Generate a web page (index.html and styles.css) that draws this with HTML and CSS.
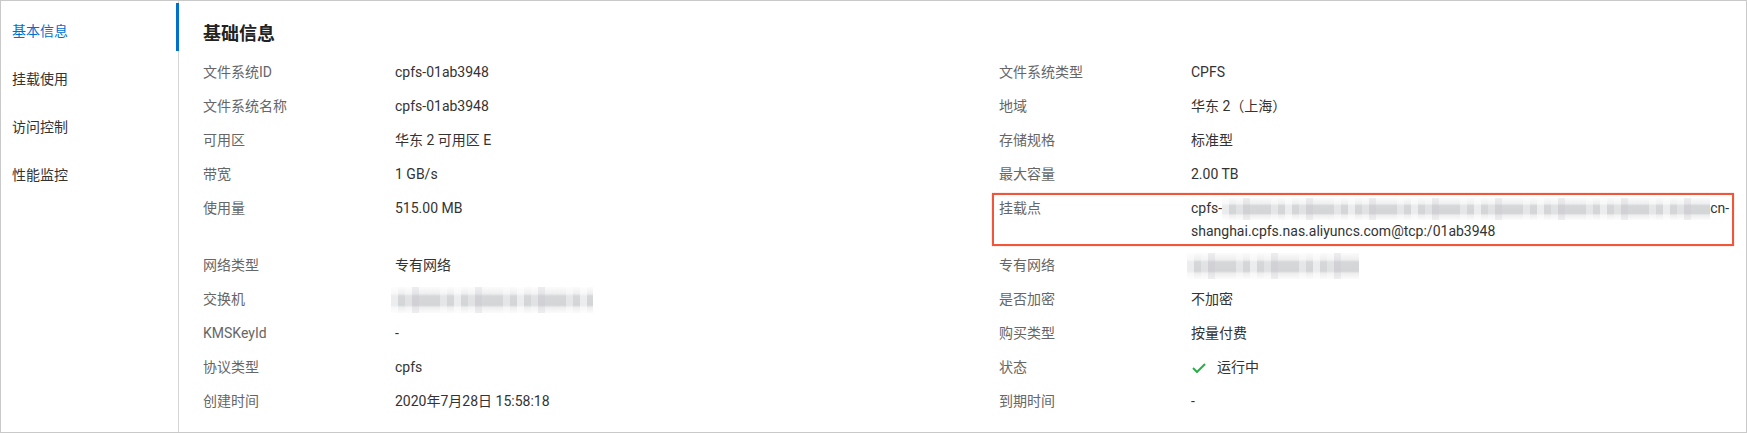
FILE: index.html
```html
<!DOCTYPE html>
<html>
<head>
  <title>基本信息</title>
  <link rel="stylesheet" href="styles.css">
</head>
<body>
  <div class="console">
    <aside class="side-nav">
      <a class="nav-item active">基本信息</a>
      <a class="nav-item">挂载使用</a>
      <a class="nav-item">访问控制</a>
      <a class="nav-item">性能监控</a>
    </aside>

    <main class="detail">
      <h2>基础信息</h2>

      <div class="info-grid">
        <div class="info-item"><span class="info-label">文件系统ID</span><span class="info-value">cpfs-01ab3948</span></div>
        <div class="info-item"><span class="info-label">文件系统类型</span><span class="info-value">CPFS</span></div>

        <div class="info-item"><span class="info-label">文件系统名称</span><span class="info-value">cpfs-01ab3948</span></div>
        <div class="info-item"><span class="info-label">地域</span><span class="info-value">华东 2（上海）</span></div>

        <div class="info-item"><span class="info-label">可用区</span><span class="info-value">华东 2 可用区 E</span></div>
        <div class="info-item"><span class="info-label">存储规格</span><span class="info-value">标准型</span></div>

        <div class="info-item"><span class="info-label">带宽</span><span class="info-value">1 GB/s</span></div>
        <div class="info-item"><span class="info-label">最大容量</span><span class="info-value">2.00 TB</span></div>

        <div class="info-item"><span class="info-label">使用量</span><span class="info-value">515.00 MB</span></div>
        <div class="info-item marked">
          <span class="info-label">挂载点</span>
          <span class="info-value">cpfs-<span class="masked mount-mask"></span>cn-<br>shanghai.cpfs.nas.aliyuncs.com@tcp:/01ab3948</span>
        </div>

        <div class="info-item"><span class="info-label">网络类型</span><span class="info-value">专有网络</span></div>
        <div class="info-item"><span class="info-label">专有网络</span><span class="info-value"><span class="masked vpc-mask"></span></span></div>

        <div class="info-item"><span class="info-label">交换机</span><span class="info-value"><span class="masked vsw-mask"></span></span></div>
        <div class="info-item"><span class="info-label">是否加密</span><span class="info-value">不加密</span></div>

        <div class="info-item"><span class="info-label">KMSKeyId</span><span class="info-value">-</span></div>
        <div class="info-item"><span class="info-label">购买类型</span><span class="info-value">按量付费</span></div>

        <div class="info-item"><span class="info-label">协议类型</span><span class="info-value">cpfs</span></div>
        <div class="info-item">
          <span class="info-label">状态</span>
          <span class="info-value">
            <svg class="status-icon" width="14" height="10" viewBox="0 0 14 10"><polyline points="1,5 5,9 13,1" fill="none" stroke="#27b047" stroke-width="2"/></svg>运行中
          </span>
        </div>

        <div class="info-item"><span class="info-label">创建时间</span><span class="info-value">2020年7月28日 15:58:18</span></div>
        <div class="info-item"><span class="info-label">到期时间</span><span class="info-value">-</span></div>
      </div>
    </main>
  </div>
</body>
</html>
```

FILE: styles.css
```css
html, body {
  margin: 0;
  padding: 0;
  background-color: #fff;
}

body {
  font-family: Roboto, "Noto Sans CJK SC", sans-serif;
  font-size: 14px;
  color: #333;
}

.console {
  display: flex;
  height: 433px;
  box-sizing: border-box;
  border: 1px solid #c9c9c9;
}

/* left menu */
.side-nav {
  width: 178px;
  flex-shrink: 0;
  box-sizing: border-box;
  padding-top: 6px;
  border-right: 1px solid #d6d6d6;
}

.nav-item {
  position: relative;
  display: block;
  height: 48px;
  line-height: 48px;
  padding-left: 11px;
  color: #333;
  text-decoration: none;
  cursor: pointer;
}

.nav-item.active {
  color: #0070cc;
}

.nav-item.active::after {
  content: "";
  position: absolute;
  top: -4px;
  right: -1px;
  width: 3px;
  height: 48px;
  background-color: #0070cc;
}

/* detail panel */
.detail {
  flex: 1;
  padding: 19px 10px 0 24px;
}

.detail h2 {
  margin: 0 0 7px;
  font-size: 18px;
  line-height: 28px;
  font-weight: bold;
  color: #222;
}

.info-grid {
  display: grid;
  grid-template-columns: 796px 1fr;
}

.info-item {
  display: flex;
  padding: 6px 0 5px;
  line-height: 23px;
}

.info-label {
  width: 192px;
  flex-shrink: 0;
  color: #666;
}

.info-value {
  flex: 1;
  color: #333;
}

.status-icon {
  margin: 0 11px 0 1px;
  vertical-align: -1px;
}

/* blurred values */
.masked {
  display: inline-block;
  height: 22px;
  margin: -4px 0;
  vertical-align: middle;
  background:
    repeating-linear-gradient(90deg, rgba(255,255,255,0.55) 0 7px, rgba(255,255,255,0) 7px 14px, rgba(255,255,255,0.3) 14px 21px, rgba(200,196,204,0.25) 21px 28px, rgba(255,255,255,0) 28px 49px, rgba(255,255,255,0.4) 49px 56px, rgba(255,255,255,0) 56px 63px),
    linear-gradient(#fbfbfb 0, #eeeff0 25%, #d5d7d9 35%, #d3d5d7 70%, #eeeeef 78%, #fbfbfb 100%);
}

.mount-mask {
  width: 488px;
}

.vpc-mask {
  width: 172px;
  height: 26px;
  margin: -4px 0 -4px -4px;
}

.vsw-mask {
  width: 202px;
  height: 26px;
  margin: -4px 0 -4px -4px;
}

/* highlighted item */
.marked {
  position: relative;
}

.marked::after {
  content: "";
  position: absolute;
  top: 2px;
  bottom: 2px;
  left: -7px;
  right: 2px;
  border: 2px solid #f2563a;
  box-shadow: 0 0 1px rgba(242, 86, 58, 0.6);
}
```
